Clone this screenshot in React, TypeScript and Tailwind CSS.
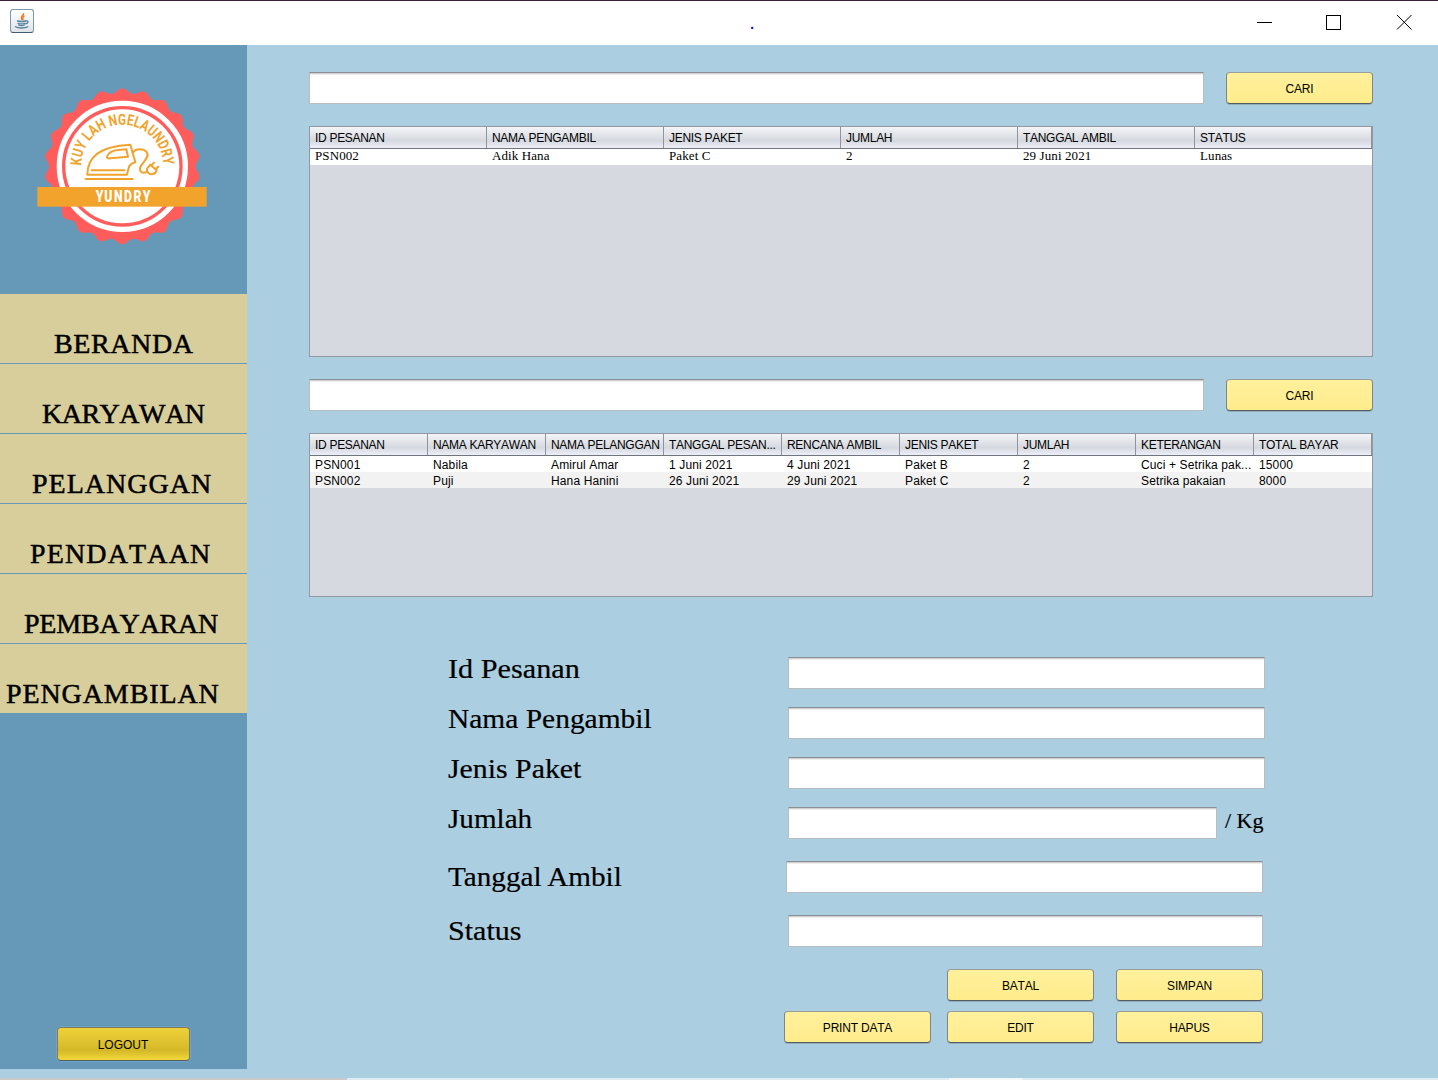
import React from 'react';

const SANS = "font-['Liberation_Sans',Arial,sans-serif]";

const menu = [
  { label: 'BERANDA', cls: 'pl-[54px] tracking-[0.6px]' },
  { label: 'KARYAWAN', cls: 'pl-[42px] tracking-[-0.5px]' },
  { label: 'PELANGGAN', cls: 'pl-[32px] tracking-[1px]' },
  { label: 'PENDATAAN', cls: 'pl-[30px] tracking-[1.15px]' },
  { label: 'PEMBAYARAN', cls: 'pl-[24px] tracking-[-0.2px]' },
  { label: 'PENGAMBILAN', cls: 'pl-[6px] tracking-[0.9px]' },
];

const pickups = {
  head: ['ID PESANAN', 'NAMA PENGAMBIL', 'JENIS PAKET', 'JUMLAH', 'TANGGAL AMBIL', 'STATUS'],
  rows: [['PSN002', 'Adik Hana', 'Paket C', '2', '29 Juni 2021', 'Lunas']],
};

const orders = {
  head: [
    'ID PESANAN', 'NAMA KARYAWAN', 'NAMA PELANGGAN', 'TANGGAL PESAN...', 'RENCANA AMBIL',
    'JENIS PAKET', 'JUMLAH', 'KETERANGAN', 'TOTAL BAYAR',
  ],
  rows: [
    ['PSN001', 'Nabila', 'Amirul Amar', '1 Juni 2021', '4 Juni 2021', 'Paket B', '2', 'Cuci + Setrika pak...', '15000'],
    ['PSN002', 'Puji', 'Hana Hanini', '26 Juni 2021', '29 Juni 2021', 'Paket C', '2', 'Setrika pakaian', '8000'],
  ],
};

const fields = [
  { label: 'Id Pesanan', row: 'h-[50px]', text: 'scale-x-[1.08]', input: 'ml-[340px] w-[477px]' },
  { label: 'Nama Pengambil', row: 'h-[50px]', text: 'scale-x-[1.052]', input: 'ml-[340px] w-[477px]' },
  { label: 'Jenis Paket', row: 'h-[50px]', text: 'scale-x-[1.065]', input: 'ml-[340px] w-[477px]' },
  { label: 'Jumlah', row: 'h-[54px]', text: 'scale-x-[1.04]', input: 'ml-[340px] w-[429px]', unit: '/ Kg' },
  { label: 'Tanggal Ambil', row: 'h-[54px]', text: 'scale-x-[1.042] pt-1', input: 'ml-[338px] w-[477px]' },
  { label: 'Status', row: 'h-[54px]', text: 'scale-x-[1.074] pt-1', input: 'ml-[340px] w-[475px]' },
];

function scallop(cx: number, cy: number) {
  const pts: string[] = [];
  for (let i = 0; i < 660; i++) {
    const a = (i / 660) * Math.PI * 2;
    const r = 226.5 + 7 * Math.cos(a * 22);
    pts.push(`${(cx + r * Math.sin(a)).toFixed(1)},${(cy - r * Math.cos(a)).toFixed(1)}`);
  }
  return pts.join(' ');
}

function Logo() {
  return (
    <svg viewBox="0 0 600 540" className="ml-[25px] h-[180px] w-[200px]">
      <polygon points={scallop(292, 274)} fill="#ff5c5c" />
      <circle cx="292" cy="274" r="189" fill="none" stroke="#fff" strokeWidth="16" />
      <circle cx="292" cy="274" r="171" fill="#fff" />
      <path id="ring" d="M169 272a123 123 0 0 1 246 0" fill="none" />
      <text
        className="font-['Roboto',sans-serif] font-bold"
        fontSize="46"
        fill="#f2a32c"
        textLength="384"
        lengthAdjust="spacingAndGlyphs"
      >
        <textPath href="#ring">KUY LAH NGELAUNDRY</textPath>
      </text>
      <g fill="none" stroke="#f2a32c" strokeWidth="6" strokeLinecap="round" strokeLinejoin="round">
        <path d="M182 312H323M200 286H298" />
        <path d="M187 299C188 248 220 214 316 209L331 262C320 264 312 272 310 282L306 299Z" />
        <path d="M246 244C252 230 266 226 280 225L304 223L309 245L256 250C248 251 244 248 246 244Z" />
        <path d="M323 233C332 220 354 219 365 231C376 246 352 262 346 276C342 289 352 298 366 290" />
        <path d="M366 281L376 269L395 286C391 298 378 301 370 294C366 290 365 286 366 281ZM379 271L387 263M392 282L400 275" />
      </g>
      <rect x="37" y="336" width="508" height="59" fill="#f2a32c" />
      <g transform="translate(212 381) scale(.72 1)">
        <text
          className="font-['Roboto',sans-serif] font-black"
          fontSize="51"
          fill="#fff"
          textLength="228"
          lengthAdjust="spacing"
        >
          YUNDRY
        </text>
      </g>
    </svg>
  );
}

function JavaIcon() {
  return (
    <span className="flex size-6 items-center justify-center rounded-[3px] border border-[#7d97ab] border-b-[#3f5b70] bg-linear-to-b from-white to-[#dfe3e6]">
      <svg viewBox="0 0 16 16" className="size-4" fill="none" strokeLinecap="round">
        <path d="M9.5 0.8C9.5 2.6 6 3.2 7.6 6.3M10 3C8 4 8.6 5 9 6.5" stroke="#ec7d2c" strokeWidth="1.5" />
        <path d="M3.5 8C6 8.6 9 8.6 11.5 8M4 10.3C6 11 9 11 10.8 10.3M4.6 12C6.5 12.8 9 12.6 10.4 12M12 8C15 7.3 14.5 10.3 11.8 10.8M1.5 13.8C4 15.4 11 15.4 13.8 13.8" stroke="#5382a1" strokeWidth="1.3" />
      </svg>
    </span>
  );
}

function TextField({ className }: { className: string }) {
  return (
    <input
      className={`h-8 shrink-0 border border-[#b9bdc0] border-t-[#8b8e93] bg-white shadow-[inset_0_1px_0_#d0d0d0,inset_0_2px_0_#efefef] outline-none ${className}`}
    />
  );
}

function Button({ children }: { children: React.ReactNode }) {
  return (
    <button
      className={`flex h-8 w-[147px] shrink-0 items-center justify-center rounded-[4px] border border-[#7f858c] border-t-[#9a9c96] border-b-[#555b63] bg-linear-to-b from-[#fff09c] to-[#ffec8c] pt-[2px] text-[12px] tracking-[-0.2px] text-black shadow-[0_1px_0_#91aebd] [font-kerning:none] ${SANS}`}
    >
      {children}
    </button>
  );
}

function Table({ head, rows, col, height, body }: {
  head: string[]; rows: string[][]; col: string; height: string; body: string;
}) {
  return (
    <div className={`w-[1064px] overflow-hidden border border-[#9297a1] bg-[#d6d9e0] text-[12px] whitespace-nowrap text-black [font-kerning:none] ${height}`}>
      <div className={`flex h-[22px] border-b border-[#6f747d] bg-linear-to-b from-[#f4f5f7] from-0% via-[#d5d8df] via-65% to-[#eceff8] tracking-[-0.3px] ${SANS}`}>
        {head.map((h) => (
          <div key={h} className={`flex h-[21px] shrink-0 items-center border-r border-[#8f939b] pl-[5px] ${col}`}>
            {h}
          </div>
        ))}
      </div>
      {rows.map((r, i) => (
        <div key={i} className={`flex h-4 ${i % 2 ? 'bg-[#f2f2f2]' : 'bg-white'}`}>
          {r.map((c, j) => (
            <div key={j} className={`shrink-0 pl-[5px] ${col} ${body}`}>{c}</div>
          ))}
        </div>
      ))}
    </div>
  );
}

export default function App() {
  return (
    <div className="flex h-[1080px] w-[1438px] flex-col overflow-hidden bg-[#accee1]">
      <header className="flex h-[45px] shrink-0 items-center border-t border-[#3c2039] bg-white pl-[10px]">
        <div className="-mt-[5px]"><JavaIcon /></div>
        <span className={`mt-[1px] ml-[716px] text-[15px] leading-4 font-bold text-[#1d12d8] ${SANS}`}>.</span>
        <svg viewBox="0 0 160 16" className="-mt-[2px] ml-[503px] h-4 w-40 text-black" fill="none" stroke="currentColor" shapeRendering="crispEdges">
          <path d="M0 8.5H15" />
          <rect x="69.5" y="1.5" width="14" height="14" />
          <path d="M140 1L154.5 15.5M154.5 1L140 15.5" shapeRendering="auto" />
        </svg>
      </header>

      <div className="flex h-[1033px] shrink-0">
        <aside className="flex h-[1024px] w-[247px] shrink-0 flex-col bg-[#6698b7]">
          <div className="h-[249px] pt-[30px]"><Logo /></div>
          <nav>
            {menu.map((m) => (
              <a
                key={m.label}
                className={`mb-px flex h-[69px] items-end bg-[#d8ce9b] pb-[3px] font-['Liberation_Serif',serif] text-[28px] leading-8 whitespace-nowrap text-black [-webkit-text-stroke:0.5px_black] [font-kerning:none] ${m.cls}`}
              >
                {m.label}
              </a>
            ))}
          </nav>
          <button
            className={`mt-auto mb-2 ml-[57px] flex h-[34px] w-[133px] items-center justify-center rounded-[4px] border border-[#7b7c58] border-b-[#555a5c] bg-linear-to-b from-[#efd23a] via-[#d4b827] via-70% to-[#f2d83a] pt-[2px] pr-px text-[12px] text-black shadow-[0_0_0_1px_#73a4d1] [font-kerning:none] ${SANS}`}
          >
            LOGOUT
          </button>
        </aside>

        <main className="flex flex-col pt-[27px] pl-[62px]">
          <div className="flex gap-[22px]">
            <TextField className="w-[895px]" />
            <Button>CARI</Button>
          </div>
          <div className="mt-[22px]">
            <Table {...pickups} col="w-[177px]" height="h-[231px]" body="font-['Liberation_Serif',serif] text-[13px] leading-[14px] tracking-[0.1px]" />
          </div>
          <div className="mt-[22px] flex gap-[22px]">
            <TextField className="w-[895px]" />
            <Button>CARI</Button>
          </div>
          <div className="mt-[22px]">
            <Table {...orders} col="w-[118px]" height="h-[164px]" body="font-['Liberation_Sans',Arial,sans-serif] leading-[18px] tracking-[0.13px]" />
          </div>

          <form className="mt-[60px] ml-[139px] font-['Liberation_Serif',serif] text-black">
            {fields.map((f) => (
              <div key={f.label} className={`flex items-start ${f.row}`}>
                <label className={`-mt-[4px] -mr-[340px] w-[340px] origin-left text-[28px] leading-8 whitespace-nowrap [-webkit-text-stroke:0.2px_black] ${f.text}`}>{f.label}</label>
                <TextField className={f.input} />
                {f.unit && <span className="ml-2 text-[22px] leading-7 [-webkit-text-stroke:0.2px_black]">{f.unit}</span>}
              </div>
            ))}
          </form>

          <div className="ml-[475px] flex w-[479px] flex-col gap-[10px]">
            <div className="flex justify-end gap-[22px]">
              <Button>BATAL</Button>
              <Button>SIMPAN</Button>
            </div>
            <div className="flex">
              <Button>PRINT DATA</Button>
              <div className="ml-4 flex gap-[22px]">
                <Button>EDIT</Button>
                <Button>HAPUS</Button>
              </div>
            </div>
          </div>
        </main>
      </div>

      <footer className="flex h-[2px] shrink-0 bg-[#e0ecf3]">
        <div className="w-[347px] bg-[#cbcbcb]" />
        <div className="ml-[602px] w-[73px] bg-[#f5f9fb]" />
      </footer>
    </div>
  );
}
